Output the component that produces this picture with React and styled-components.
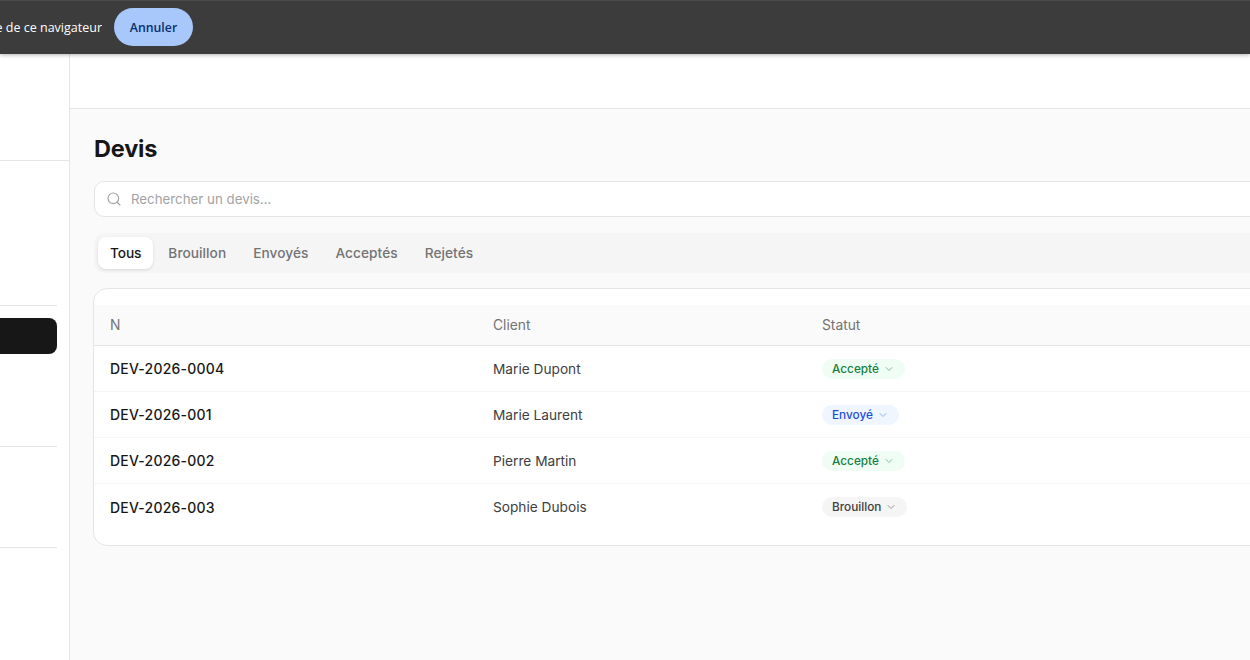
import React from "react";
import styled, { createGlobalStyle } from "styled-components";
import { Search, ChevronDown } from "lucide-react";

const Global = createGlobalStyle`
  html, body {
    margin: 0;
    height: 100%;
    overflow: hidden;
    background: #fff;
    font-family: "Inter", "Liberation Sans", sans-serif;
  }
  * { box-sizing: border-box; }
`;

const Page = styled.div`
  width: 1250px;
  height: 660px;
  display: flex;
  flex-direction: column;
  overflow: hidden;
`;

const ShareBar = styled.div`
  position: relative;
  z-index: 2;
  flex: 0 0 54px;
  display: flex;
  align-items: center;
  background: #3c3c3c;
  box-shadow: inset 0 1px 0 #4a4a4a, 0 1px 4px rgba(0, 0, 0, 0.3);
`;

const ShareText = styled.div`
  width: 102px;
  display: flex;
  justify-content: flex-end;
  overflow: hidden;
  white-space: nowrap;
  font-family: "Open Sans", sans-serif;
  font-size: 12.5px;
  color: #fff;
`;

const CancelButton = styled.button`
  margin-left: 12px;
  width: 79px;
  height: 38px;
  padding: 0;
  border: 0;
  border-radius: 19px;
  background: #a8c7fa;
  color: #062e6f;
  font-family: "Open Sans", sans-serif;
  font-size: 12.3px;
  font-weight: 600;
`;

const Body = styled.div`
  flex: 1;
  display: flex;
  min-height: 0;
`;

const Sidebar = styled.aside`
  flex: 0 0 70px;
  border-right: 1px solid #e5e5e5;
  background: #fff;
  display: flex;
  flex-direction: column;
`;

const SideBlock = styled.div`
  flex: 0 0 ${(p) => p.$height}px;
  margin-right: ${(p) => p.$inset}px;
  border-bottom: 1px solid #e5e5e5;
`;

const ActiveItem = styled.div`
  height: 36px;
  margin-top: 12px;
  background: #171717;
  border-radius: 0 8px 8px 0;
`;

const Content = styled.div`
  flex: 1;
  min-width: 0;
  display: flex;
  flex-direction: column;
  background: #fafafa;
`;

const TopBar = styled.div`
  flex: 0 0 55px;
  background: #fff;
  border-bottom: 1px solid #e5e5e5;
`;

const Main = styled.main`
  width: 1300px;
  padding: 24px 0 0 24px;
`;

const Title = styled.h1`
  margin: 0;
  height: 32px;
  font-size: 23.5px;
  line-height: 32px;
  font-weight: 700;
  letter-spacing: -0.2px;
  color: #171717;
`;

const SearchBox = styled.div`
  margin-top: 16px;
  height: 36px;
  display: flex;
  align-items: center;
  gap: 9px;
  padding-left: 11px;
  background: #fff;
  border: 1px solid #e5e5e5;
  border-radius: 10px;
  color: #a3a3a3;
  font-size: 13.3px;
`;

const Tabs = styled.div`
  margin-top: 16px;
  height: 40px;
  display: flex;
  align-items: center;
  gap: 3px;
  padding: 0 4px;
  background: #f5f5f5;
  border-radius: 10px;
`;

const Tab = styled.div`
  height: 32px;
  display: flex;
  align-items: center;
  padding: 0 12px;
  border-radius: 8px;
  font-size: 13.7px;
  font-weight: 500;
  letter-spacing: ${(p) => (p.$active ? "-0.1px" : "0.05px")};
  color: ${(p) => (p.$active ? "#171717" : "#737373")};
  background: ${(p) => (p.$active ? "#fff" : "transparent")};
  box-shadow: ${(p) => (p.$active ? "0 1px 3px rgba(0,0,0,.12)" : "none")};
`;

const Card = styled.div`
  margin: 15px 0 0 -1px;
  height: 258px;
  padding: 16px 0;
  background: #fff;
  border: 1px solid #e5e5e5;
  border-radius: 14px;
`;

const Row = styled.div`
  display: grid;
  grid-template-columns: 383px 329px 1fr;
  align-items: center;
  height: ${(p) => (p.$head ? 41 : 46)}px;
  padding-left: 16px;
  background: ${(p) => (p.$head ? "#fafafa" : "#fff")};
  border-bottom: ${(p) =>
    p.$head ? "1px solid #e5e5e5" : p.$last ? "0" : "1px solid #f5f5f5"};
`;

const HeadCell = styled.div`
  font-size: 13.8px;
  color: #737373;
`;

const Ref = styled.div`
  font-size: 14px;
  font-weight: 500;
  letter-spacing: 0.2px;
  color: #171717;
`;

const ClientName = styled.div`
  font-size: 13.7px;
  color: #404040;
`;

const tones = {
  green: { bg: "#f0fdf4", fg: "#15803d", icon: "#6fb98a" },
  blue: { bg: "#eff6ff", fg: "#1d4ed8", icon: "#8aa4e6" },
  gray: { bg: "#f5f5f5", fg: "#404040", icon: "#8a8a8a" },
};

const Badge = styled.span`
  justify-self: start;
  height: 20px;
  display: inline-flex;
  align-items: center;
  gap: 4px;
  padding: 0 10px;
  border-radius: 10px;
  font-size: 11.8px;
  font-weight: 500;
  background: ${(p) => tones[p.$tone].bg};
  color: ${(p) => tones[p.$tone].fg};
  svg {
    color: ${(p) => tones[p.$tone].icon};
  }
`;

const quotes = [
  { id: "DEV-2026-0004", client: "Marie Dupont", status: "Accepté", tone: "green" },
  { id: "DEV-2026-001", client: "Marie Laurent", status: "Envoyé", tone: "blue" },
  { id: "DEV-2026-002", client: "Pierre Martin", status: "Accepté", tone: "green" },
  { id: "DEV-2026-003", client: "Sophie Dubois", status: "Brouillon", tone: "gray" },
];

const tabs = ["Tous", "Brouillon", "Envoyés", "Acceptés", "Rejetés"];

export default function App() {
  return (
    <Page>
      <Global />
      <ShareBar>
        <ShareText>Partage de ce navigateur</ShareText>
        <CancelButton>Annuler</CancelButton>
      </ShareBar>
      <Body>
        <Sidebar>
          <SideBlock $height={107} $inset={0} />
          <SideBlock $height={145} $inset={12} />
          <SideBlock $height={141} $inset={12}>
            <ActiveItem />
          </SideBlock>
          <SideBlock $height={101} $inset={12} />
        </Sidebar>
        <Content>
          <TopBar />
          <Main>
            <Title>Devis</Title>
            <SearchBox>
              <Search size={16} strokeWidth={1.75} />
              Rechercher un devis...
            </SearchBox>
            <Tabs>
              {tabs.map((t, i) => (
                <Tab key={t} $active={i === 0}>
                  {t}
                </Tab>
              ))}
            </Tabs>
            <Card>
              <Row $head>
                <HeadCell>N</HeadCell>
                <HeadCell>Client</HeadCell>
                <HeadCell>Statut</HeadCell>
              </Row>
              {quotes.map((q, i) => (
                <Row key={q.id} $last={i === quotes.length - 1}>
                  <Ref>{q.id}</Ref>
                  <ClientName>{q.client}</ClientName>
                  <Badge $tone={q.tone}>
                    {q.status}
                    <ChevronDown size={12} strokeWidth={1.75} />
                  </Badge>
                </Row>
              ))}
            </Card>
          </Main>
        </Content>
      </Body>
    </Page>
  );
}
